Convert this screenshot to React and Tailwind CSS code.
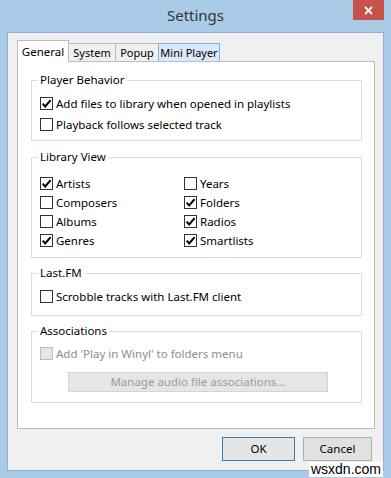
import React from 'react';

const Check = ({ checked, disabled }) => (
  <span
    className={`w-[13px] h-[13px] border flex items-center justify-center shrink-0 ${
      disabled ? 'bg-[#e6e6e6] border-[#bcbcbc]' : 'bg-white border-[#333333]'
    }`}
  >
    {checked && (
      <svg width="11" height="11" viewBox="0 0 11 11">
        <path d="M1.6 5.6 L4.2 8.4 L9.6 2.2" stroke="#000" strokeWidth="2" fill="none" />
      </svg>
    )}
  </span>
);

const Option = ({ label, checked, disabled, h = 'h-[19px]' }) => (
  <div className={`flex items-center gap-[3px] ${h}`}>
    <Check checked={checked} disabled={disabled} />
    <span className={disabled ? 'text-[#8d8d8d]' : 'text-black'}>{label}</span>
  </div>
);

const Group = ({ title, className, children }) => (
  <fieldset className={`border border-[#dcdcdc] ${className}`}>
    <legend className="ml-[6px] px-[2px] h-[16px] leading-[16px] text-black">{title}</legend>
    {children}
  </fieldset>
);

const Tab = ({ label, active, hover, w }) => {
  if (active) {
    return (
      <div className={`relative z-10 -mb-px h-[22px] ${w} pt-[2px] text-center bg-white border border-b-0 border-[#bcbcbc] text-black`}>
        {label}
      </div>
    );
  }
  return (
    <div
      className={`h-[18px] ${w} text-center text-[11px] leading-[17px] border border-b-0 -ml-px ${
        hover ? 'bg-[#d8eaf9] border-[#7eb4ea]' : 'bg-[#f0f0f0] border-[#bcbcbc]'
      } text-black whitespace-nowrap`}
    >
      {label}
    </div>
  );
};

const libraryOptions = [
  ['Artists', true],
  ['Years', false],
  ['Composers', false],
  ['Folders', true],
  ['Albums', false],
  ['Radios', true],
  ['Genres', true],
  ['Smartlists', true],
];

export default function App() {
  return (
    <div className="relative w-[391px] h-[478px] bg-[#aacbe8] font-['Noto_Sans',sans-serif] text-[11.5px] overflow-hidden">
      {/* title bar */}
      <div className="relative h-[32px] flex items-center justify-center">
        <span className="text-[15px] text-[#333333] -mt-[2px]">Settings</span>
        <div className="absolute top-0 right-[7px] w-[31px] h-[20px] bg-[#c8514b] flex items-center justify-center">
          <svg width="9" height="9" viewBox="0 0 9 9">
            <path d="M1 1 L8 8 M8 1 L1 8" stroke="#fff" strokeWidth="1.8" />
          </svg>
        </div>
      </div>

      {/* client area */}
      <div className="ml-[7px] w-[377px] h-[439px] bg-[#f0f0f0] border border-[#8fb1d3]">
        <div className="pt-[7px] pl-[9px] flex items-end">
          <Tab label="General" active w="w-[52px]" />
          <Tab label="System" w="w-[48px]" />
          <Tab label="Popup" w="w-[44px]" />
          <Tab label="Mini Player" hover w="w-[62px]" />
        </div>

        <div className="ml-[9px] w-[358px] bg-white border border-[#bcbcbc] pt-[10px] pb-[25px] pl-[13px] pr-[12px] flex flex-col gap-[8px]">
          <Group title="Player Behavior">
            <div className="pt-[5px] pb-[5px] pl-[8px]">
              <Option label="Add files to library when opened in playlists" checked h="h-[21px]" />
              <Option label="Playback follows selected track" h="h-[21px]" />
            </div>
          </Group>

          <Group title="Library View">
            <div className="pt-[9px] pb-[7px] pl-[8px] grid grid-cols-[144px_1fr]">
              {libraryOptions.map(([label, checked]) => (
                <Option key={label} label={label} checked={checked} />
              ))}
            </div>
          </Group>

          <Group title="Last.FM" className="-mt-px">
            <div className="pt-[6px] pb-[9px] pl-[8px]">
              <Option label="Scrobble tracks with Last.FM client" />
            </div>
          </Group>

          <Group title="Associations" className="-mt-px">
            <div className="pt-[5px] pb-[10px] pl-[8px]">
              <Option label="Add 'Play in Winyl' to folders menu" disabled />
              <div className="mt-[9px] ml-[28px] w-[260px] h-[20px] bg-[#e6e6e6] border border-[#d4d4d4] flex items-center justify-center text-[#9a9a9a]">
                Manage audio file associations...
              </div>
            </div>
          </Group>
        </div>

        <div className="mt-[8px] pr-[11px] flex justify-end gap-[8px]">
          <div className="w-[73px] h-[24px] bg-[#e5e5e5] border border-[#3c7fb1] flex items-center justify-center text-black">
            OK
          </div>
          <div className="w-[69px] h-[24px] bg-[#e1e1e1] border border-[#adadad] flex items-center justify-center text-black">
            Cancel
          </div>
        </div>
      </div>

      {/* watermark */}
      <div className="absolute right-[8px] bottom-[1px] bg-white px-[2px] h-[15px] leading-[14px] text-[14px] text-black font-['Liberation_Sans',sans-serif]">
        wsxdn.com
      </div>
    </div>
  );
}
